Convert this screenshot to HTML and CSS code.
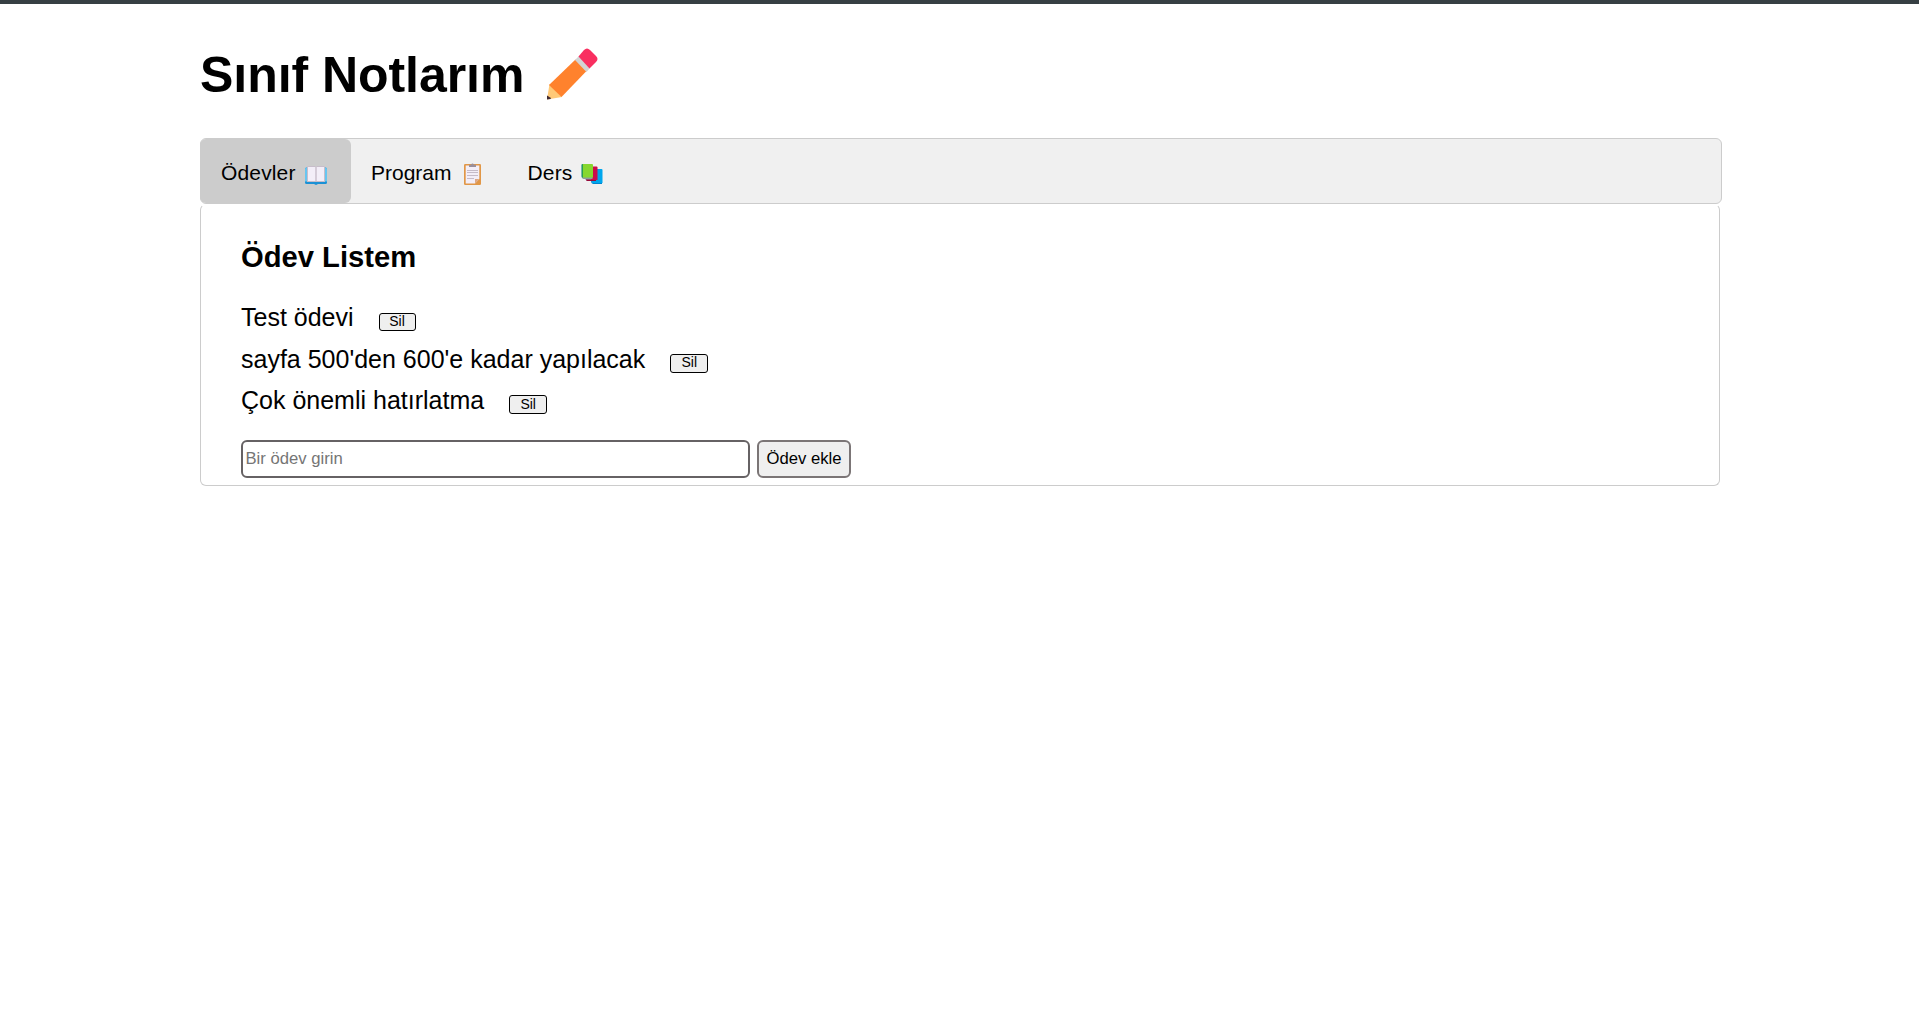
FILE: index.html
```html
<!DOCTYPE html>
<html lang="tr">
<head>
<meta charset="utf-8">
<title>Sınıf Notlarım</title>
<link rel="stylesheet" href="styles.css">
</head>
<body>
<div class="topbar"></div>
<main class="container">
  <h1 class="title">
    <span class="title-text">Sınıf Notlarım</span>
    <svg class="pencil" viewBox="0 0 52 52">
      <path fill="#ffc977" d="M3.5 36 16 49 1 51.500Z"/>
      <path fill="#402a32" d="M1 47.5 5 50 4.500 51 1 51.500Z"/>
      <path fill="#ff822d" d="M3 37 29.500 11.500 40.500 23 15.500 49Z"/>
      <path fill="#d3d3d3" d="M29 12 33 8 44 20 40.500 24Z"/>
      <path fill="#f92f60" d="M32.500 8.500 38 2Q41 -1 44 2L50 8Q53 11 50 14L43.500 20.500Z"/>
    </svg>
  </h1>
  <nav class="tabs">
    <button class="tab tab-active"><span class="label label-wide">Ödevler</span>
      <svg class="icon icon-book" viewBox="0 0 22 22">
        <path fill="#1b91d5" d="M0 6Q0 4.500 1.500 4.500H20.500Q22 4.500 22 6V19.500Q22 21 20.500 21H13L11 22 9 21H1.500Q0 21 0 19.500Z"/>
        <path fill="#68c5f0" d="M0 6Q0 4.500 1.500 4.500H20.500Q22 4.500 22 6V18.500H0Z"/>
        <path fill="#c7bdca" d="M2 4 3 3H10L11 4 12 3H19L20 4V19H2Z"/>
        <path fill="#f3eef8" d="M3 4H10.300V18H3ZM11.700 4H19V18H11.700Z"/>
      </svg>
    </button>
    <button class="tab"><span class="label">Program</span>
      <svg class="icon icon-clipboard" viewBox="0 0 17 22">
        <rect y="1" width="17" height="21" rx="1.200" fill="#e19747"/>
        <path fill="#f3eef8" d="M1.700 2.500H15.300V16L11 20.500H1.700Z"/>
        <path fill="#dda784" d="M11 20.500V16H15.300Z"/>
        <path fill="#998f9b" d="M5 4V1.800H7Q8.500 -1 10 1.800H12V4Z"/>
        <path stroke="#c5bbc9" stroke-width="1" d="M3 7.500H14M3 9.500H14M3 12.500H14M3 15.500H10" fill="none"/>
      </svg>
    </button>
    <button class="tab tab-last"><span class="label label-wide">Ders</span>
      <svg class="icon icon-books" viewBox="0 0 22 22">
        <path fill="#0084ce" d="M10 18H21V21H12Q10 20.500 10 18Z"/>
        <path fill="#00a6ed" d="M11 6H20.500Q21.500 6 21.500 7V20H11Z"/>
        <path fill="#998ea4" d="M4.500 15H15V18H7Q4.500 18 4.500 16Z"/>
        <path fill="#990838" d="M4.500 16.500H15V18H6Z"/>
        <path fill="#ca0b4a" d="M10 3.500H15.500Q16.500 3.500 16.500 4.500V17H10Z"/>
        <path fill="#8aa09b" d="M1 13H11.500V16H2.500Q1 16 1 14Z"/>
        <path fill="#008463" d="M.5 2Q.5 1 1.500 1H2V14.500H1Q.5 14.500 .5 13Z"/>
        <path fill="#86d72f" d="M1.700 1H11Q12 1 12 2V14.500H1.700Z"/>
      </svg>
    </button>
  </nav>
  <section class="panel">
    <h2 class="heading">Ödev Listem</h2>
    <ul class="list">
      <li class="item"><span>Test ödevi</span><button class="delete delete-first">Sil</button></li>
      <li class="item"><span>sayfa 500'den 600'e kadar yapılacak</span><button class="delete">Sil</button></li>
      <li class="item"><span>Çok önemli hatırlatma</span><button class="delete">Sil</button></li>
    </ul>
    <form class="form">
      <input class="input" type="text" placeholder="Bir ödev girin">
      <button class="add" type="button">Ödev ekle</button>
    </form>
  </section>
</main>
</body>
</html>
```
FILE: styles.css
```css
* {
  box-sizing: border-box;
}

body {
  margin: 0;
  background: #fff;
  color: #000;
  font-family: Arial, "Liberation Sans", sans-serif;
}

button,
input {
  font-family: inherit;
}

.topbar {
  height: 4px;
  background: #363f43;
}

.container {
  width: 1522px;
  margin-left: 200px;
}

.title {
  display: flex;
  align-items: flex-start;
  height: 134px;
  margin: 0;
  padding-top: 43px;
  font-size: 50px;
  line-height: 56px;
}

.title-text {
  width: 346px;
  white-space: nowrap;
  letter-spacing: -0.05px;
}

.pencil {
  width: 52px;
  height: 52px;
  margin-top: 1px;
}

.tabs {
  display: flex;
  height: 66px;
  background: #f0f0f0;
  border: 1px solid #ccc;
  border-radius: 6px;
}

.tab {
  display: flex;
  align-items: center;
  gap: 9px;
  padding: 5px 20px 0;
  border: 0;
  border-radius: 6px;
  background: transparent;
  color: #000;
  font-size: 21px;
}

.tab-active {
  width: 151px;
  margin-left: -1px;
  padding-left: 21px;
  background: #ccc;
}

.tab-active .label {
  margin-right: 0;
}

.tab-last {
  padding-left: 21px;
}

.tab-last .label {
  margin-right: 0;
}

.label {
  padding-bottom: 2px;
  margin-right: 1px;
}

.label-wide {
  letter-spacing: 0.15px;
}

.icon {
  height: 22px;
}

.icon-book {
  width: 22px;
}

.icon-clipboard {
  width: 17px;
  margin: 0 6px 0 2px;
}

.icon-books {
  width: 22px;
}

.panel {
  width: 1520px;
  height: 282px;
  padding: 34px 40px 0;
  border: 1px solid #ccc;
  border-top-color: transparent;
  border-radius: 6px;
}

.heading {
  margin: 0;
  font-size: 29.2px;
  line-height: 36px;
}

.list {
  margin: 22px 0 0;
  padding: 0;
  list-style: none;
}

.item {
  display: flex;
  align-items: flex-start;
  gap: 25px;
  height: 41.5px;
  font-size: 25px;
  line-height: 41px;
}

.delete {
  width: 38px;
  height: 19px;
  margin-top: 15px;
  padding: 0 0 1px;
  border: 1px solid #000;
  border-radius: 3px;
  background: #efefef;
  color: #000;
  font-size: 14px;
  line-height: 15px;
}

.delete-first {
  width: 37px;
  height: 18px;
  margin-top: 16px;
  padding-bottom: 2px;
}

.form {
  display: flex;
  gap: 7px;
  margin-top: 18px;
}

.input {
  width: 509px;
  height: 38px;
  padding: 0 2.5px;
  border: 2px solid #666264;
  border-radius: 6px;
  background: #fff;
  font-size: 16.67px;
}

.input::placeholder {
  color: #757575;
}

.add {
  width: 94px;
  height: 38px;
  padding: 0;
  border: 2px solid #7b7576;
  border-radius: 6px;
  background: #efefef;
  color: #000;
  font-size: 16.67px;
}
```
